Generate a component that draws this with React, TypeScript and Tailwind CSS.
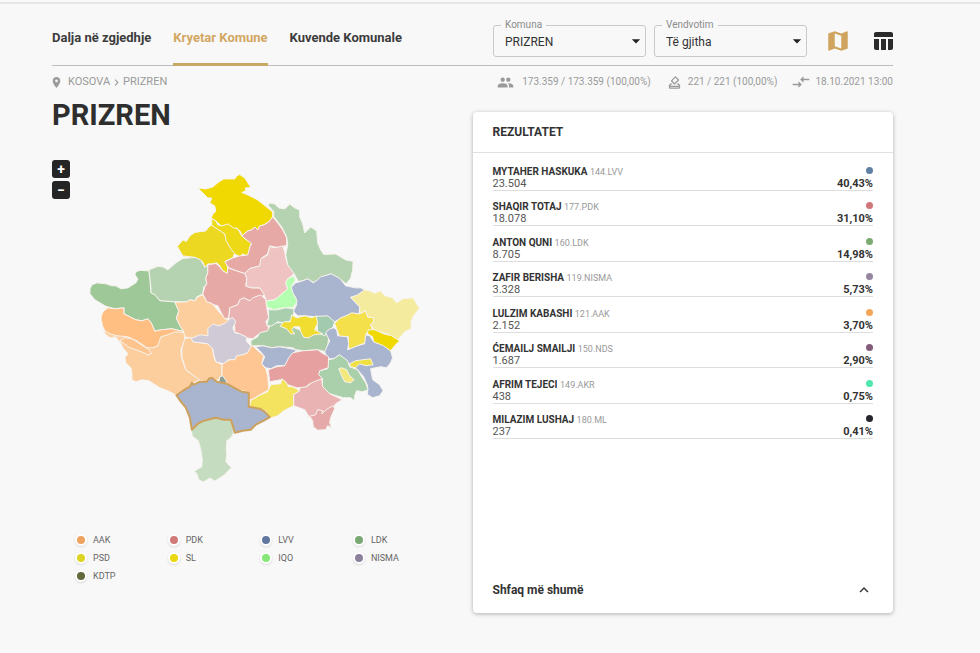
import React, { useState, FC } from "react";
import {
  MdArrowDropDown,
  MdChevronRight,
  MdCompareArrows,
  MdKeyboardArrowUp,
  MdLocationOn,
  MdMap,
  MdOutlineHowToVote,
  MdPeople,
  MdTableChart,
} from "react-icons/md";

const tabs = ["Dalja në zgjedhje", "Kryetar Komune", "Kuvende Komunale"];

const results = [
  { name: "MYTAHER HASKUKA", list: "144.LVV", votes: "23.504", percent: "40,43%", color: "bg-[#5f7fa5]" },
  { name: "SHAQIR TOTAJ", list: "177.PDK", votes: "18.078", percent: "31,10%", color: "bg-[#d17679]" },
  { name: "ANTON QUNI", list: "160.LDK", votes: "8.705", percent: "14,98%", color: "bg-[#7bab70]" },
  { name: "ZAFIR BERISHA", list: "119.NISMA", votes: "3.328", percent: "5,73%", color: "bg-[#9585a0]" },
  { name: "LULZIM KABASHI", list: "121.AAK", votes: "2.152", percent: "3,70%", color: "bg-[#f2a65a]" },
  { name: "ĆEMAILJ SMAILJI", list: "150.NDS", votes: "1.687", percent: "2,90%", color: "bg-[#845c7c]" },
  { name: "AFRIM TEJECI", list: "149.AKR", votes: "438", percent: "0,75%", color: "bg-[#4fe8ac]" },
  { name: "MILAZIM LUSHAJ", list: "180.ML", votes: "237", percent: "0,41%", color: "bg-[#26262e]" },
];

const parties = [
  { name: "AAK", color: "bg-[#f0a35f]" },
  { name: "PDK", color: "bg-[#d07a7a]" },
  { name: "LVV", color: "bg-[#62779f]" },
  { name: "LDK", color: "bg-[#7aa874]" },
  { name: "PSD", color: "bg-[#dcd322]" },
  { name: "SL", color: "bg-[#ead70c]" },
  { name: "IQO", color: "bg-[#85e876]" },
  { name: "NISMA", color: "bg-[#8c809c]" },
  { name: "KDTP", color: "bg-[#606b3c]" },
];

// later regions are painted over earlier ones, so shared borders may overlap
const regions = [
  { id: "leposaviq", fill: "#efd900", points: "198,188 206,189 213,187 219,182 224,179 235,179 237,176 240,174.5 245,178 251,187.5 245.5,188 246,191 242,192.5 248,195 258,200 273,212 273,217 269,222 264,225 260,226 258,230 255,227 252,230 248,231 242,236 241,232 237,228 234,229 228,225 221.5,226 216,221 211.5,218 213,214 216,211.5 215,206 210,203 212,198 208,198" },
  { id: "zubin-potok", fill: "#ecd820", points: "177.5,246.5 183,240 186.5,241.5 190,236 195,232.5 206,231 209,227 212,225 216,227 225,234 228,243 235,253 233,258 226,261 228,268 227.5,273.5 223,271 220,266 217,263 212,264 208,264 205,267.5 203,262 195,257.5 183,256" },
  { id: "zvecan", fill: "#eed916", points: "212,218.5 216,221 218,225 222,226 228,224 231,226 234,228 238,229 242,236 247,240 252,243 250,247 250,253 247,256 243,254 240,257 235,254 231,249 226.5,241.5 225,234 212,225.5" },
  { id: "istog", fill: "#b5d3b0", points: "149,270 158,266.5 163,267 168,270 176,263 183,258.5 195,257.5 201,260 205,267.5 208,265 208,273 206,278 207,284 204,287 203,294 197,297 195,301 190,300 187,302 175,302 160,301 155,295 151,293 151,287 150,280" },
  { id: "peja", fill: "#9fc899", points: "90,289 92,285 97,283 106,284 112,286 116,286 121,289 128,288 136,283 138,279 135,275 136,272 140,270.5 149,271 150,280 151,293 155,295 160,301 175,302 179,311 176.5,318.5 180,325 183.5,331.5 172,329 161,330 155,331.5 151.5,323.5 148,319 142,321 136,320 130,317 124,314 124,308 115,309 106,306.5 95,300 90,294" },
  { id: "decan", fill: "#ffbe82", points: "101,318 103,312 108,308 115,309 124,308 124,314 130,317 136,320 142,321 148,319 151.5,323.5 155,331.5 161,330 172,329 185,332 178,335 170,335 162,338 160,345 151.5,349 140,350 120,343 116,338 110,337 106,334 103,328" },
  { id: "gjakova", fill: "#fdce9d", points: "103,327 105,331 110,334 117,336 128,337 137,341 147,348 153,348 158,346 161,337 168,335 175,332 185,333 185,340 181,350 181.5,357 186,370 194,376 201,380 191,384 189,388 182,391 176.5,395.5 168,391 160,388 149,381 142,380 136,382 132,380 132,373 131,368 126,363 125,358 128,354 123,348 120,342 116,337 110,338 105,334" },
  { id: "junik", fill: "#fdc48e", points: "120,341 125,338 132,339 140,344 149,350 151.5,354 148,355 141.5,352 130,348" },
  { id: "klina", fill: "#fdce9d", points: "175,302.5 187,302 190,300 195,301 198,297 203,295 207,302 211,303 215,307 220,313 226,319 232,322 225,326 214,332 208,338 192,339 185,337 183.5,331 180,326 176.5,318.5 179,311.5" },
  { id: "rahovec", fill: "#fdce9d", points: "185,338.5 192,338 194,342 208,344 213,349 214,357 216,362 222.5,365 222,377 217,381 212,378 207,382.5 200,380.5 194,376 186,370 182,357 182,349" },
  { id: "skenderaj", fill: "#e6a9a5", points: "208,265 216,263.5 220,267 223,271 227.5,273.5 228,268 234,270 245,273.5 247,278 246,286 252,288 260,288 265,295 258,299 250,301 244,298 240,300 238,305 230,308 229,318 225,319 222,314 218,306 214,305 211,303 207,302 203,294 205,287 207,284 206,278 208,273" },
  { id: "mitrovica", fill: "#e6a9a5", points: "273,217 278,223 283,230 287,238 287,245 280,248 270,246 268,254 262,258 260,266 250,269 245,273.5 237,271 229,268 225,262 233,258 240,256 248,255 250,247 252,244 242,236 248,231 252,230 255,227 258,230 260,226 264,225 269,222" },
  { id: "vushtrri", fill: "#eec3c2", points: "270,246.5 275,248 283,246 285,252 286,258 288,265 292,269 294.5,274 288,279 286,283 288,289 281,295 275,300 266.5,301 264,294 260,288 252,288 246.5,286.5 247,278 245,273.5 250,268.5 257,267 260,266 261,259 268,255" },
  { id: "drenas", fill: "#eab3b3", points: "230,308 238,305 240,300 244,298 250,301 253,298 261,295 266,300 267,308 269,318 266,322 268,326 270,331 265,332 258,335 253,339 246,338 238,333 235,333 235,326 229,319" },
  { id: "malisheva", fill: "#d0c9d6", points: "191.5,338.5 200,335 208,336 208,329 213,324 219,326 226,323 230,319 233,318 236,322 233,328 235,333 240,334 246.5,337 247,342 252,347 248,353 243,355 237,356 235,360 229,360 224,364 216,362 214,355 213,349 208,344 193,342" },
  { id: "suhareka", fill: "#fdc692", points: "222.5,364.5 230,360 235,360 237,356 243,355 248,353 252,345 258,351 264,356 262,364 266,369 268,376 269,390 262,394 252,400 248,400 249,393 236,389 225,382 222,376" },
  { id: "dragash", fill: "#c5dcc1", points: "191.5,430 198,424 204,421 216,418 224,420 231,420 233.5,427 233.5,434 231,438 227,441 226.5,448 227,455 226,462 231.5,468 225,475 215,481.5 210,478.5 203.5,482.5 199,480 197,474 194.5,471.5 202,467 202.5,460 201,450 198.5,441 192.5,436.5" },
  { id: "podujeva", fill: "#b5d3b1", points: "268,205 271,203 275,204 279,208 285,209 290,204 295,208 300,210 300,217 303,224 305,233 311,227 317,231 318,243 321,250 324,254.5 336,254 346,260 353.5,261.5 353,270 351,278.5 346.5,284 340,279 331.5,274 323,277 320,280 313.5,282.5 308,279 303,281 298.5,281.5 294.5,274 288,265 286,255 288,245 287,237 282,227 274,216.5 274,211.5" },
  { id: "pristina", fill: "#a9b4cf", points: "291.5,287.5 296,283 303,281 308,279 313.5,283 318,280 321,277 331.5,274 340,278.5 346,286 356,288 361,288 365,290 363,296 351,297.5 355,302 360,307 359.5,314 352,314 346.5,316 340,319 335,322 328,318 316,317 305,316 298,316 293.5,311.5 297,305 296,298 293,293" },
  { id: "obiliq", fill: "#b5ffb0", points: "266.5,301 275,300 281,295 288,289 286,283 288,279 294.5,276 295.5,281 291.5,287 293,293 296,298 297.5,302 293,308 284,308 274,310 267,307" },
  { id: "lipjan", fill: "#aacda8", points: "251.5,346 251,341 258,337 260,333 268,331 270,326 274,323 282,323 300,330 323,330 328.5,332 329,339 328,346 326,352 318,350 305,351 296,350 293,348 280,347 272,348 263,346" },
  { id: "fushe-kosova", fill: "#a9cfaf", points: "268.5,310 277,310 286,308 294,309 294,314 291,321 283,323 278,322 272,326 267,326 269,318" },
  { id: "hajvali", fill: "#a2caae", points: "316.5,316.5 328,316 335,322 333,328 328,331 325,336 318,333 317.5,325" },
  { id: "gracanica", fill: "#f0dd30", points: "280.5,326.5 284,322 290.5,322 292,315 297,318 305,316 312,318 316.5,316 318,323 315,330 319,332 323,334 314,335 309,338 304,337.5 301,332 300,327 294,327 292,330 295,334 291,334 287,329" },
  { id: "novoberda", fill: "#f4e04a", points: "335,323.5 341,318 346.5,316 352,313 359.5,314 366.5,311 368,317 374,318 374,322 371,325 373,330 367,333 366,343 358,346 350,350 348,344 349,337 340,337 337,329" },
  { id: "kamenica", fill: "#f4eb9e", points: "351,297.5 358,295 365,290 370,291 375,293.5 381,291 385,296 393,298 397,303 403,299 413.5,298 417,304 420,308.5 414,316 411.5,322 411.5,329 405,332 401,337 398,341 388,334 375,331 371,325 374,322 374,318 368,317 366,311 360,314 360,307 355,302" },
  { id: "gjilan", fill: "#a9b4cf", points: "326,333 330,329 334,328 337,330 338,336 348,337 349,344 348,350 358,346 365,344 366,335 370,336 374,342 384,345 391,351 393,358 391,363 387,368 381,367 371,369 373,380 380,385 383.5,391 380,396 373,398 368,395 368,386 364,377 358,370 348,363 340,355 334,359 328,359 325,352 330,341" },
  { id: "ranillug", fill: "#efd900", points: "368.5,330 375,330 384,334 392,336 400,341 395,346 391,351 384,346 374,342 373,337 368,334" },
  { id: "viti", fill: "#aacfab", points: "328.5,360 334,359 340,355 348,361 350,367 358,370 362,377 366,383 368.5,390 363,392 357,391 355,396 355,401 351,398 344,398 337,396 330,394 322,388 323,379 318.5,375 320,371 328,369" },
  { id: "kllokot", fill: "#efdf40", points: "350,364 356,361 363,360 371,359 373.5,365 366,366 360,364 356,368 351,367" },
  { id: "partesh", fill: "#f2e87c", points: "339,369 342,368 347,370 350,376 354.5,380 351,383 345,382 342,376" },
  { id: "shtime", fill: "#a9b4cf", points: "256,347 263,346 272,348 280,347 296.5,350 293,356 289,360 285,366 277,366 271,369 266,368 262,364 265,357 261,352" },
  { id: "ferizaj", fill: "#e5a09f", points: "268.5,370 277,367 285,366 289,358 293,353 303,351 318,350 322,353 329,357 328.5,368 320,371 319,375 323,379 318,382 310,384 305,388 297,388 285,384 281,380 270,382" },
  { id: "shterpce", fill: "#f3e35f", points: "251,401 259,396 268,392 271,385 281,384 282,379 286,382 289,387 293,387 300,391 294,395 294,406 284,411 278,416 270,418.5 266,411 250,407" },
  { id: "kacanik", fill: "#eab3b3", points: "294,395 300,391 300,388 307,387 312,383 322,379 323,387 330,394 342.5,400 336,404 332,410 324,416 310,418 305,410 294,406" },
  { id: "hani-i-elezit", fill: "#e6a9a9", points: "310,416.5 316,415 318,410 323,411 322,414 328,409 333.5,406 335,409 331,418 330,423 332,428 328,426 326,430 318,430.5 313.5,427 313,421" },
  { id: "mamusha", fill: "#8fa096", points: "219,382 220,377 223,376 227,382 225,385" },
];

const prizren =
  "176.5,395.5 183,391 190,387 192,383 194,385 200,382 207,382 209,379 212,378 217,382 227,384 236,389 242,392 249,393 249,407 260,409 265,412 270,417.5 264,421 256,425 251,430 243,431 235,433 233,426 231,420 224,420 216,418 204,421 198,424 192,430 190,418 186,408 181,402";

type FieldProps = {
  id: string;
  label: string;
  options: string[];
};

const SelectField: FC<FieldProps> = ({ id, label, options }) => {
  return (
    <div className="relative w-[153px]">
      <label
        htmlFor={id}
        className="absolute -top-2 left-2 bg-[#f8f8f8] px-1 text-[10px] leading-4 text-[#8c8c8c]"
      >
        {label}
      </label>
      <select
        id={id}
        className="h-8 w-full appearance-none rounded-[3px] border border-[#c9c9c9] pl-[11px] pr-6 pt-0.5 text-xs text-[#333333]"
      >
        {options.map((option) => (
          <option key={option}>{option}</option>
        ))}
      </select>
      <MdArrowDropDown
        size={20}
        className="pointer-events-none absolute right-0 top-[6px] text-[#222222]"
      />
    </div>
  );
};

const RegionMap: FC = () => {
  return (
    <svg viewBox="52 160 421 340" className="block w-full" role="img" aria-label="Kosova">
      <g stroke="#f6f3ee" strokeWidth="1" strokeLinejoin="round">
        {regions.map((region) => (
          <polygon key={region.id} fill={region.fill} points={region.points} />
        ))}
      </g>
      <polygon
        points={prizren}
        fill="#a9b5cf"
        stroke="#cda15c"
        strokeWidth="2"
        strokeLinejoin="round"
      />
    </svg>
  );
};

const App: FC = () => {
  const [active, setActive] = useState(1);

  return (
    <div className="min-h-screen bg-[#f8f8f8] pt-0.5 font-['Roboto',sans-serif] text-[#333333]">
      <div className="border-t-2 border-[#e6e6e6] pb-9 pl-[52px] pr-[87px]">
        <header className="flex h-[62px] items-stretch justify-between border-b border-[#bdbdbd]">
          <nav className="flex gap-[22px]">
            {tabs.map((tab, index) => (
              <a
                key={tab}
                href="#"
                onClick={() => setActive(index)}
                className={
                  active === index
                    ? "-mb-px whitespace-nowrap border-b-[3px] border-[#c8a964] pt-6 text-[13px] font-bold leading-5 text-[#d3a762]"
                    : "whitespace-nowrap pt-6 text-[13px] font-bold leading-5 text-[#3c3c3c]"
                }
              >
                {tab}
              </a>
            ))}
          </nav>
          <div className="-mr-0.5 flex items-center gap-2 pt-3">
            <SelectField id="komuna" label="Komuna" options={["PRIZREN"]} />
            <SelectField id="vendvotim" label="Vendvotim" options={["Të gjitha"]} />
            <button aria-label="Harta" className="ml-2.5 text-[#cfa45f]">
              <MdMap size={26} />
            </button>
            <button aria-label="Tabela" className="ml-3 text-[#2b2b2b]">
              <MdTableChart size={24} />
            </button>
          </div>
        </header>

        <div className="flex items-center justify-between pt-1.5 leading-4 text-[#9a9a9a]">
          <div className="flex items-center text-[11px]">
            <MdLocationOn size={13} className="-ml-0.5 mr-[5px]" />
            <a href="#">KOSOVA</a>
            <MdChevronRight size={13} />
            <a href="#">PRIZREN</a>
          </div>
          <div className="flex items-center text-[10px]">
            <MdPeople size={17} className="mr-2" />
            <span>173.359 / 173.359 (100,00%)</span>
            <MdOutlineHowToVote size={15} className="ml-4 mr-1.5" />
            <span>221 / 221 (100,00%)</span>
            <MdCompareArrows size={20} className="ml-3.5 mr-1" />
            <span>18.10.2021 13:00</span>
          </div>
        </div>

        <main className="grid grid-cols-2">
          <section>
            <h1 className="pt-[5px] text-[29px] font-bold leading-[36px] text-[#2e2e2e]">
              PRIZREN
            </h1>
            <div className="relative mt-[27px]">
              <div className="absolute left-0 top-0 flex flex-col gap-[3px]">
                <button
                  aria-label="Zmadho"
                  className="flex h-[18px] w-[18px] items-center justify-center rounded-[3px] bg-[#252525] text-sm font-bold text-white"
                >
                  +
                </button>
                <button
                  aria-label="Zvogëlo"
                  className="flex h-[18px] w-[18px] items-center justify-center rounded-[3px] bg-[#252525] text-sm font-bold text-white"
                >
                  −
                </button>
              </div>
              <RegionMap />
            </div>
            <ul className="ml-[23px] mr-[27px] mt-[31px] grid grid-cols-4 text-[9px] leading-[18px] text-[#666666]">
              {parties.map((party) => (
                <li key={party.name} className="flex items-center gap-1.5">
                  <span
                    className={`h-3 w-3 rounded-full border-2 border-white shadow-sm ${party.color}`}
                  />
                  {party.name}
                </li>
              ))}
            </ul>
          </section>

          <section className="mt-5 flex min-h-[501px] flex-col rounded-sm bg-white shadow-[0_1px_4px_rgba(0,0,0,0.3)]">
            <h2 className="border-b border-[#e0e0e0] px-5 py-[10px] text-xs font-bold leading-5">
              REZULTATET
            </h2>
            <ul className="mt-[2px] grid h-[284px] grid-rows-8 px-5">
              {results.map((row) => (
                <li
                  key={row.list}
                  className="flex items-end justify-between border-b border-[#dddddd]"
                >
                  <div>
                    <p className="text-[10px] font-bold leading-3">
                      {row.name}{" "}
                      <span className="text-[9px] font-normal text-[#999999]">
                        {row.list}
                      </span>
                    </p>
                    <p className="text-[11px] leading-3 text-[#555555]">
                      {row.votes}
                    </p>
                  </div>
                  <div className="flex flex-col items-end">
                    <span className={`mb-1 h-[7px] w-[7px] rounded-full ${row.color}`} />
                    <p className="text-[11px] font-bold leading-3">
                      {row.percent}
                    </p>
                  </div>
                </li>
              ))}
            </ul>
            <button className="mt-auto flex items-center justify-between px-5 pb-[13px] text-xs font-bold leading-5">
              Shfaq më shumë
              <MdKeyboardArrowUp size={18} />
            </button>
          </section>
        </main>
      </div>
    </div>
  );
};

export default App;
